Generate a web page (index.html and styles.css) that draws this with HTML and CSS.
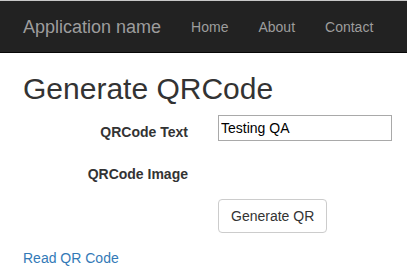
FILE: index.html
```html
<!DOCTYPE html>
<html lang="en">
<head>
    <meta charset="UTF-8">
    <title>Generate QRCode</title>
    <link rel="stylesheet" href="styles.css">
</head>
<body>
    <nav class="navbar">
        <a class="brand" href="#">Application name</a>
        <ul class="nav">
            <li><a href="#">Home</a></li>
            <li><a href="#">About</a></li>
            <li><a href="#">Contact</a></li>
        </ul>
    </nav>
    <div class="container">
        <h2>Generate QRCode</h2>
        <form class="form-horizontal">
            <div class="form-group">
                <label for="qrtext">QRCode Text</label>
                <div><input type="text" id="qrtext" value="Testing QA"></div>
            </div>
            <div class="form-group">
                <label>QRCode Image</label>
                <div></div>
            </div>
            <div class="form-group">
                <span></span>
                <div><button type="button" class="btn">Generate QR</button></div>
            </div>
        </form>
        <a class="link" href="#">Read QR Code</a>
    </div>
</body>
</html>
```

FILE: styles.css
```css
body {
    margin: 0;
    font-family: "Liberation Sans", Arial, sans-serif;
    font-size: 14px;
    line-height: 20px;
    color: #333;
    background: #fff;
}
.navbar {
    display: flex;
    align-items: center;
    height: 51px;
    padding: 0 23px;
    background: #222;
    border-top: 1px solid #c8c8c8;
    border-bottom: 1px solid #080808;
    white-space: nowrap;
}
.brand {
    flex-shrink: 0;
    font-size: 18px;
    line-height: 20px;
    color: #9d9d9d;
    text-decoration: none;
}
.nav {
    display: flex;
    flex-shrink: 0;
    list-style: none;
    margin: 0 0 0 15px;
    padding: 0;
}
.nav a {
    display: block;
    padding: 0 15px;
    color: #9d9d9d;
    text-decoration: none;
}
.container {
    padding: 0 23px;
}
h2 {
    margin: 19px 0 10px;
    font-size: 30px;
    font-weight: 500;
    line-height: 33px;
}
.form-group {
    display: grid;
    grid-template-columns: 165px 1fr;
    column-gap: 30px;
    margin-bottom: 15px;
}
.form-group label {
    padding-top: 7px;
    text-align: right;
    font-weight: bold;
}
.form-group input {
    box-sizing: border-box;
    width: 174px;
    height: 26px;
    padding: 1px 2px;
    border: 1px solid #a9a9a9;
    font-family: "Liberation Sans", Arial, sans-serif;
    font-size: 14px;
    color: #000;
}
.btn {
    padding: 6px 12px;
    font-family: "Liberation Sans", Arial, sans-serif;
    font-size: 14px;
    line-height: 20px;
    color: #333;
    background: #fff;
    border: 1px solid #ccc;
    border-radius: 4px;
}
.link {
    color: #337ab7;
    text-decoration: none;
}
```
